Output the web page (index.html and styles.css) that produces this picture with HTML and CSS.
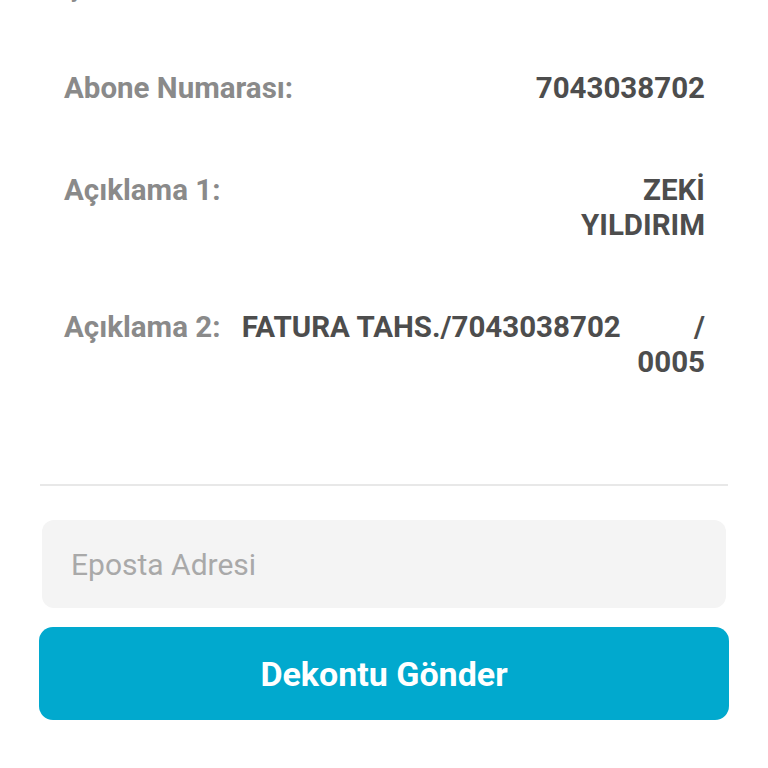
FILE: index.html
```html
<!DOCTYPE html>
<html lang="tr">
<head>
    <meta charset="UTF-8">
    <meta name="viewport" content="width=device-width, initial-scale=1.0">
    <title>Dekont</title>
    <link rel="stylesheet" href="styles.css">
</head>
<body>
    <div class="receipt">
        <div class="details">
            <div class="row">
                <p class="label">Şube Kodu:</p>
                <p class="value">0005</p>
            </div>
            <div class="row">
                <p class="label">Abone Numarası:</p>
                <p class="value">7043038702</p>
            </div>
            <div class="row">
                <p class="label">Açıklama 1:</p>
                <p class="value">ZEKİ
YILDIRIM</p>
            </div>
            <div class="row">
                <p class="label">Açıklama 2:</p>
                <p class="value">FATURA TAHS./7043038702          /
0005</p>
            </div>
        </div>

        <div class="divider"></div>

        <form class="send-form">
            <input type="email" class="email" placeholder="Eposta Adresi">
            <button type="submit" class="send-btn">Dekontu Gönder</button>
        </form>
    </div>
</body>
</html>
```

FILE: styles.css
```css
* {
    margin: 0;
    padding: 0;
    box-sizing: border-box;
}

body {
    background: #ffffff;
    font-family: Roboto, "Noto Sans", Arial, sans-serif;
    overflow: hidden;
}

.receipt {
    /* page is scrolled: the first row sits above the top edge */
    margin-top: -64px;
    padding: 0 39px;
}

.details {
    padding: 0 24px 70px 25px;
}

.row {
    display: flex;
    gap: 19px;
    padding: 33px 0 34px;
    font-size: 29.5px;
    line-height: 35px;
    font-weight: bold;
}

.label {
    flex-shrink: 0;
    color: #8a8a8a;
}

.value {
    flex: 1;
    color: #4d4d4d;
    text-align: right;
    white-space: pre;
}

.divider {
    height: 2px;
    margin: 0 1px;
    background: #e8e8e8;
}

.send-form {
    display: flex;
    flex-direction: column;
    gap: 19px;
    padding-top: 34px;
}

.email {
    height: 88px;
    margin: 0 3px;
    padding: 0 29px;
    border: none;
    border-radius: 12px;
    background: #f4f4f4;
    font-family: inherit;
    font-size: 30px;
    color: #444;
    outline: none;
}

.email::placeholder {
    color: #a9a9a9;
}

.send-btn {
    height: 93px;
    border: none;
    border-radius: 14px;
    background: #01a9ce;
    color: #ffffff;
    font-family: inherit;
    font-size: 34px;
    font-weight: bold;
    cursor: pointer;
}
```
